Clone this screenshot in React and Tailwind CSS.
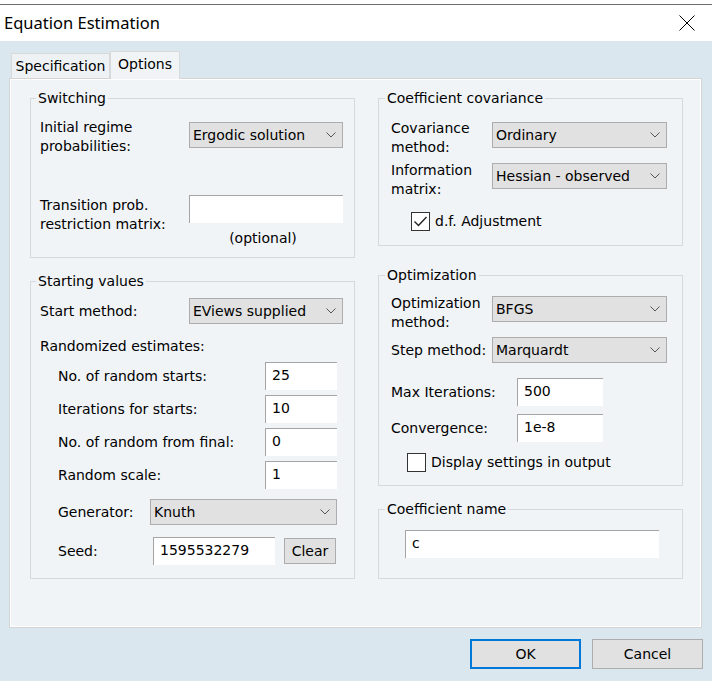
import React from 'react';

const Chevron = () => (
  <svg width="10" height="6" viewBox="0 0 10 6" className="shrink-0">
    <polyline points="0.5,0.5 5,5 9.5,0.5" fill="none" stroke="#555" strokeWidth="1" />
  </svg>
);

const Dropdown = ({ value, className = '' }) => (
  <div
    className={`flex items-center justify-between h-[26px] border border-[#adadad] bg-[#e1e1e1] pl-[3px] pr-[6px] ${className}`}
  >
    <span className="whitespace-nowrap pt-[1px]">{value}</span>
    <Chevron />
  </div>
);

const TextBox = ({ value, className = '' }) => (
  <div
    className={`flex items-center h-[28px] bg-white border-t border-l border-[#a5a5a5] pl-[6px] pb-[2px] ${className}`}
  >
    {value}
  </div>
);

const Check = ({ checked }) => (
  <div className="w-[19px] h-[19px] border border-[#333] bg-white flex items-center justify-center shrink-0">
    {checked && (
      <svg width="15" height="13" viewBox="0 0 15 13">
        <polyline points="1.5,6.5 5.5,10.5 13.5,2" fill="none" stroke="#222" strokeWidth="1.4" />
      </svg>
    )}
  </div>
);

const Group = ({ title, className = '', legendClass = 'ml-[5px]', children }) => (
  <fieldset className={`border border-[#d5d9dd] ${className}`}>
    <legend className={`${legendClass} px-[2px] leading-[18px]`}>{title}</legend>
    {children}
  </fieldset>
);

const NumRow = ({ label, value, className = 'mt-[5px]' }) => (
  <div className={`flex items-center h-[28px] ${className}`}>
    <div className="w-[207px]">{label}</div>
    <TextBox className="w-[72px]" value={value} />
  </div>
);

export default function App() {
  return (
    <div className="w-[712px] h-[681px] bg-[#dbe7ef] text-black text-[14px] font-['DejaVu_Sans',sans-serif] overflow-hidden">
      {/* title bar */}
      <div className="h-[4px] bg-white" />
      <div className="h-[1px] bg-[#6d6d6d]" />
      <div className="h-[36px] bg-white flex items-center justify-between pl-[4px] pr-[17px]">
        <span className="text-[16.5px] font-['Noto_Sans',sans-serif]">Equation Estimation</span>
        <svg width="16" height="16" viewBox="0 0 16 16">
          <path d="M0.5 0.5 L15.5 15.5 M15.5 0.5 L0.5 15.5" stroke="#000" strokeWidth="1" />
        </svg>
      </div>

      <div className="pl-[9px] pr-[9px] pt-[10px]">
        {/* tabs */}
        <div className="flex items-end h-[27px] pl-[2px]">
          <div className="w-[99px] h-[25px] border border-b-0 border-[#d9d9d9] bg-[#eef2f5] flex items-center justify-center">
            Specification
          </div>
          <div className="relative z-10 w-[70px] h-[28px] -mb-[1px] border border-b-0 border-[#d9d9d9] bg-[#f0f4f7] flex items-center justify-center pb-[2px]">
            Options
          </div>
        </div>

        {/* panel */}
        <div className="w-[693px] h-[550px] border border-[#d4d4d4] bg-[#f0f4f7] shadow-[inset_1px_1px_0_#fff,inset_-1px_-1px_0_#fff] pl-[20px] pt-[10px] flex gap-x-[23px]">
          {/* left column */}
          <div className="w-[325px] flex flex-col">
            <Group title="Switching" className="h-[169px]">
              <div className="pl-[9px]">
                <div className="mt-[10px] flex items-start">
                  <div className="w-[149px] leading-[19px] pt-[1px]">
                    Initial regime
                    <br />
                    probabilities:
                  </div>
                  <Dropdown className="mt-[5px] w-[154px]" value="Ergodic solution" />
                </div>
                <div className="mt-[39px] flex items-start">
                  <div className="w-[149px] leading-[19px] pt-[1px]">
                    Transition prob.
                    <br />
                    restriction matrix:
                  </div>
                  <div className="flex flex-col items-center w-[154px]">
                    <TextBox className="w-[154px]" value="" />
                    <div className="mt-[6px] leading-[19px] pr-[6px]">(optional)</div>
                  </div>
                </div>
              </div>
            </Group>

            <Group title="Starting values" className="mt-[14px] h-[307px]">
              <div className="pl-[9px]">
                <div className="mt-[8px] flex items-center h-[26px]">
                  <div className="w-[149px] pt-[1px]">Start method:</div>
                  <Dropdown className="w-[154px]" value="EViews supplied" />
                </div>
                <div className="mt-[12px] leading-[19px] pt-[1px]">Randomized estimates:</div>
                <div className="pl-[18px]">
                  <NumRow label="No. of random starts:" value="25" className="mt-[6px]" />
                  <NumRow label="Iterations for starts:" value="10" />
                  <NumRow label="No. of random from final:" value="0" />
                  <NumRow label="Random scale:" value="1" />
                  <div className="mt-[10px] flex items-center h-[26px]">
                    <div className="w-[92px] pt-[1px]">Generator:</div>
                    <Dropdown className="w-[187px]" value="Knuth" />
                  </div>
                  <div className="mt-[12px] flex items-center h-[28px]">
                    <div className="w-[95px]">Seed:</div>
                    <TextBox className="w-[122px]" value="1595532279" />
                    <button className="ml-[9px] w-[52px] h-[26px] border border-[#adadad] bg-[#e1e1e1] flex items-center justify-center pt-[1px]">
                      Clear
                    </button>
                  </div>
                </div>
              </div>
            </Group>
          </div>

          {/* right column */}
          <div className="w-[305px] flex flex-col">
            <Group title="Coefficient covariance" className="h-[157px]" legendClass="ml-[6px]">
              <div className="pl-[12px]">
                <div className="mt-[11px] flex items-start">
                  <div className="w-[101px] leading-[19px] pt-[1px]">
                    Covariance
                    <br />
                    method:
                  </div>
                  <Dropdown className="mt-[4px] w-[175px]" value="Ordinary" />
                </div>
                <div className="mt-[3px] flex items-start">
                  <div className="w-[101px] leading-[19px] pt-[1px]">
                    Information
                    <br />
                    matrix:
                  </div>
                  <Dropdown className="mt-[3px] w-[175px]" value="Hessian - observed" />
                </div>
                <div className="mt-[12px] pl-[20px] flex items-center">
                  <Check checked />
                  <span className="ml-[5px]">d.f. Adjustment</span>
                </div>
              </div>
            </Group>

            <Group title="Optimization" className="mt-[20px] h-[220px]" legendClass="ml-[6px]">
              <div className="pl-[12px]">
                <div className="mt-[9px] flex items-start">
                  <div className="w-[101px] leading-[19px] pt-[1px]">
                    Optimization
                    <br />
                    method:
                  </div>
                  <Dropdown className="mt-[3px] w-[175px]" value="BFGS" />
                </div>
                <div className="mt-[5px] flex items-center h-[26px]">
                  <div className="w-[101px] whitespace-nowrap pt-[1px]">Step method:</div>
                  <Dropdown className="w-[175px]" value="Marquardt" />
                </div>
                <div className="mt-[15px] flex items-center h-[28px]">
                  <div className="w-[126px]">Max Iterations:</div>
                  <TextBox className="w-[86px]" value="500" />
                </div>
                <div className="mt-[8px] flex items-center h-[28px]">
                  <div className="w-[126px]">Convergence:</div>
                  <TextBox className="w-[86px]" value="1e-8" />
                </div>
                <div className="mt-[10px] pl-[16px] flex items-center">
                  <Check />
                  <span className="ml-[5px]">Display settings in output</span>
                </div>
              </div>
            </Group>

            <Group title="Coefficient name" className="mt-[14px] h-[79px]" legendClass="ml-[6px]">
              <div className="pl-[26px] pt-[12px]">
                <TextBox className="w-[254px]" value="c" />
              </div>
            </Group>
          </div>
        </div>

        {/* buttons */}
        <div className="mt-[11px] flex justify-end gap-x-[11px]">
          <button className="w-[111px] h-[30px] border-2 border-[#0078d7] bg-[#e1e1e1] flex items-center justify-center pt-[1px]">
            OK
          </button>
          <button className="w-[111px] h-[30px] border border-[#adadad] bg-[#e1e1e1] flex items-center justify-center pt-[1px]">
            Cancel
          </button>
        </div>
      </div>
    </div>
  );
}
